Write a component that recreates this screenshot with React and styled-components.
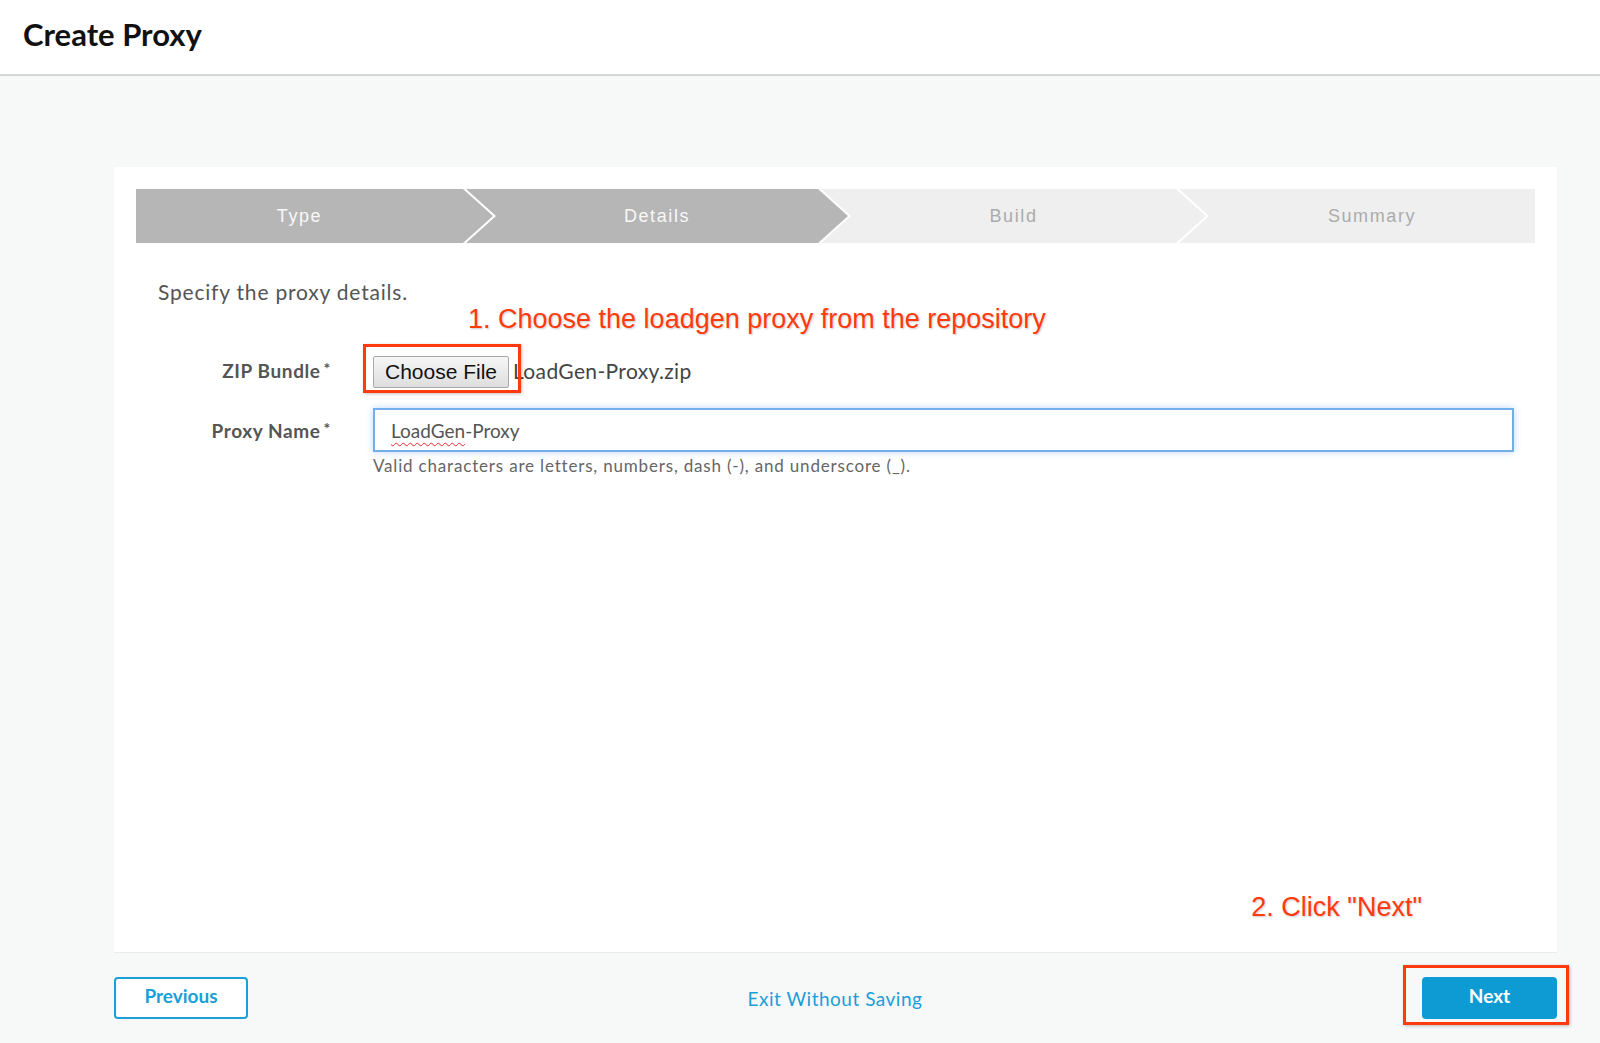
import React from 'react'
import styled, { createGlobalStyle } from 'styled-components'

const GlobalStyle = createGlobalStyle`
  html, body {
    margin: 0;
    padding: 0;
    background-color: #f7f8f8;
    font-family: Lato, "Open Sans", sans-serif;
  }
  * {
    box-sizing: border-box;
  }
`

const Page = styled.div`
  min-height: 100vh;
  background-color: #f7f8f8;
`

const Header = styled.header`
  height: 76px;
  background-color: #fff;
  border-bottom: 2px solid #d6d6d6;
  display: flex;
  align-items: center;
  padding: 0 0 4px 23px;
  h1 {
    margin: 0;
    font-size: 31px;
    line-height: 1.2;
    font-weight: 700;
    color: #111;
  }
`

const Main = styled.main`
  padding: 91px 43px 0 114px;
  min-height: calc(100vh - 76px);
`

const Card = styled.section`
  height: 786px;
  background-color: #fff;
  border-bottom: 1px solid #ebebeb;
  padding: 22px;
  display: flex;
  flex-direction: column;
`

const Steps = styled.ol`
  margin: 0;
  padding: 0;
  list-style: none;
  display: flex;
  height: 54px;
`

const Step = styled.li`
  flex: ${(p) => (p.$w ? `0 0 ${p.$w}px` : '1 1 auto')};
  height: 100%;
  margin-left: ${(p) => (p.$first ? '0' : '-27px')};
  padding: ${(p) => (p.$first ? '0' : '0 0 0 30px')};
  padding-right: ${(p) => (p.$last ? '0' : '30px')};
  background-color: ${(p) => (p.$done ? '#b6b6b6' : '#efefef')};
  color: ${(p) => (p.$done ? '#f8f8f8' : '#ababab')};
  display: flex;
  align-items: center;
  justify-content: center;
  font-family: "Liberation Sans", Arial, sans-serif;
  font-size: 18px;
  letter-spacing: 1.6px;
  clip-path: ${(p) => {
    const left = p.$first ? '0 100%' : '0 100%, 30px 50%'
    const right = p.$last
      ? '100% 0, 100% 100%'
      : 'calc(100% - 30px) 0, 100% 50%, calc(100% - 30px) 100%'
    return `polygon(0 0, ${right}, ${left})`
  }};
`

const Intro = styled.p`
  margin: 36px 0 0 22px;
  font-size: 21px;
  line-height: 1.2;
  letter-spacing: 0.8px;
  color: #555;
`

const Note = styled.div`
  font-family: "Liberation Sans", Arial, sans-serif;
  font-size: 27px;
  line-height: 30px;
  color: #ff3a0c;
  text-shadow: 1px 1px 2px rgba(0, 0, 0, 0.22);
  margin-left: ${(p) => p.$left || 0}px;
  align-self: ${(p) => (p.$end ? 'flex-end' : 'flex-start')};
  margin-right: ${(p) => p.$right || 0}px;
  margin-top: ${(p) => (p.$end ? 'auto' : '0')};
  margin-bottom: ${(p) => p.$bottom || 0}px;
`

const Form = styled.div`
  display: grid;
  grid-template-columns: 195px 1fr;
  column-gap: 42px;
  row-gap: 20px;
  margin-top: 22px;
  padding-right: 21px;
`

const Label = styled.label`
  text-align: right;
  font-size: 19px;
  line-height: 1.2;
  font-weight: 700;
  letter-spacing: 0.6px;
  color: #555;
  padding-top: ${(p) => p.$top}px;
  sup {
    font-size: 16px;
    margin-left: 3px;
    vertical-align: 4px;
  }
`

const FileRow = styled.div`
  display: flex;
  align-items: center;
  height: 32px;
`

const FilePick = styled.span`
  position: relative;
  display: inline-flex;
`

const ChooseButton = styled.button`
  width: 136px;
  height: 32px;
  padding: 0;
  border: 1px solid #a9a9a9;
  border-radius: 2px;
  background: linear-gradient(#f6f6f6, #dedede);
  font-family: "Liberation Sans", Arial, sans-serif;
  font-size: 21px;
  color: #111;
`

const Highlight = styled.span`
  position: absolute;
  top: ${(p) => p.$t}px;
  right: ${(p) => p.$r}px;
  bottom: ${(p) => p.$b}px;
  left: ${(p) => p.$l}px;
  border: 3px solid #ff3a0c;
  box-shadow: 1px 1px 3px rgba(0, 0, 0, 0.25);
  pointer-events: none;
`

const FileName = styled.span`
  margin: 0 0 4px 4px;
  font-size: 21px;
  line-height: 1.2;
  letter-spacing: 0.35px;
  color: #444;
`

const Field = styled.div`
  display: flex;
  flex-direction: column;
`

const TextBox = styled.div`
  height: 44px;
  border: 2px solid #74aee8;
  box-shadow: 0 0 7px rgba(110, 170, 235, 0.45);
  display: flex;
  align-items: center;
  padding: 2px 16px 0;
  font-size: 19px;
  line-height: 1.2;
  color: #555;
  .typo {
    text-decoration: underline wavy #e8262a;
    text-decoration-thickness: 1px;
    text-underline-offset: 4px;
  }
`

const Help = styled.div`
  margin-top: 4px;
  font-size: 17px;
  line-height: 1.2;
  letter-spacing: 0.82px;
  color: #666;
`

const Footer = styled.footer`
  display: flex;
  align-items: center;
  justify-content: space-between;
  margin-top: 24px;
`

const Button = styled.button`
  width: ${(p) => p.$w}px;
  height: 42px;
  border-radius: 4px;
  border: 2px solid #1a9fd8;
  background-color: ${(p) => (p.$primary ? '#0e9ad3' : '#fff')};
  border-color: ${(p) => (p.$primary ? '#0e9ad3' : '#1a9fd8')};
  color: ${(p) => (p.$primary ? '#fff' : '#1a9fd8')};
  font-family: Lato, sans-serif;
  font-size: 19px;
  font-weight: 700;
  padding: 0 0 6px;
`

const ExitLink = styled.a`
  font-size: 19px;
  letter-spacing: 0.5px;
  color: #1a9fd8;
  text-decoration: none;
`

const NextWrap = styled.span`
  position: relative;
  display: inline-flex;
`

const steps = [
  { name: 'Type', done: true, w: 357 },
  { name: 'Details', done: true, w: 382 },
  { name: 'Build', done: false, w: 385 },
  { name: 'Summary', done: false },
]

export default function App() {
  return (
    <Page>
      <GlobalStyle />
      <Header>
        <h1>Create Proxy</h1>
      </Header>
      <Main>
        <Card>
          <Steps>
            {steps.map((s, i) => (
              <Step
                key={s.name}
                $first={i === 0}
                $last={i === steps.length - 1}
                $done={s.done}
                $w={s.w}
              >
                {s.name}
              </Step>
            ))}
          </Steps>
          <Intro>Specify the proxy details.</Intro>
          <Note $left={332}>1. Choose the loadgen proxy from the repository</Note>
          <Form>
            <Label $top={2}>
              ZIP Bundle<sup>*</sup>
            </Label>
            <FileRow>
              <FilePick>
                <ChooseButton>Choose File</ChooseButton>
                <Highlight $t={-12} $r={-12} $b={-5} $l={-10} />
              </FilePick>
              <FileName>LoadGen-Proxy.zip</FileName>
            </FileRow>
            <Label $top={10}>
              Proxy Name<sup>*</sup>
            </Label>
            <Field>
              <TextBox>
                <span>
                  <span className="typo">LoadGen</span>-Proxy
                </span>
              </TextBox>
              <Help>Valid characters are letters, numbers, dash (-), and underscore (_).</Help>
            </Field>
          </Form>
          <Note $end $right={113} $bottom={8}>
            2. Click "Next"
          </Note>
        </Card>
        <Footer>
          <Button $w={134}>Previous</Button>
          <ExitLink href="#">Exit Without Saving</ExitLink>
          <NextWrap>
            <Button $w={135} $primary>
              Next
            </Button>
            <Highlight $t={-12} $r={-12} $b={-6} $l={-19} />
          </NextWrap>
        </Footer>
      </Main>
    </Page>
  )
}
